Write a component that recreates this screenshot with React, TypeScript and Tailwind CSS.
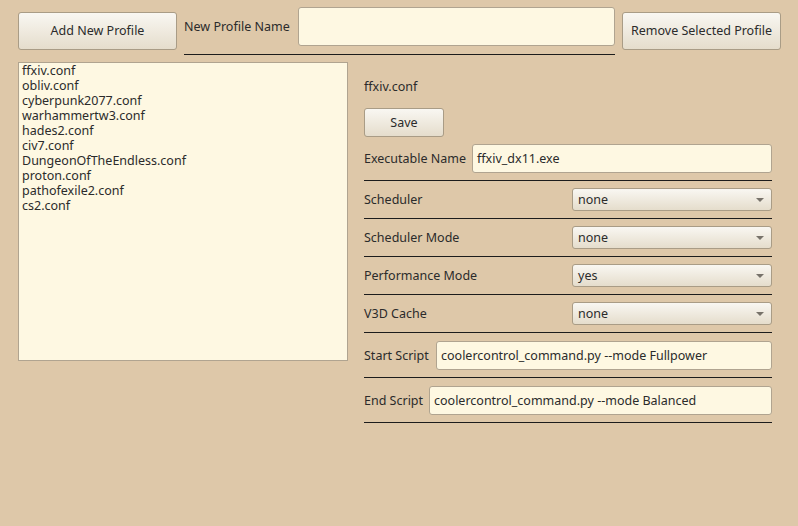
const profiles = [
  'ffxiv.conf',
  'obliv.conf',
  'cyberpunk2077.conf',
  'warhammertw3.conf',
  'hades2.conf',
  'civ7.conf',
  'DungeonOfTheEndless.conf',
  'proton.conf',
  'pathofexile2.conf',
  'cs2.conf',
];

const combos = [
  { label: 'Scheduler', value: 'none' },
  { label: 'Scheduler Mode', value: 'none' },
  { label: 'Performance Mode', value: 'yes' },
  { label: 'V3D Cache', value: 'none' },
];

const bevel =
  'rounded-[3px] border border-[#a99c86] bg-gradient-to-b from-[#f9f7f2] to-[#e5ddcc] text-[#2b2b2b] flex items-center';
const btn = `${bevel} justify-center pt-[1px]`;
const field =
  'rounded-[3px] border border-[#b0a490] bg-[#fef8e2] text-[#2b2b2b] flex items-center px-[4px] pt-[1px]';

function Combo({ value }: { value: string }) {
  return (
    <div className={`${bevel} w-[200px] h-[23px] justify-between pl-[5px] pr-[7px] pt-[1px]`}>
      <span>{value}</span>
      <svg width="8" height="4" viewBox="0 0 8 4">
        <path d="M0 0 L8 0 L4 4 Z" fill="#77726a" />
      </svg>
    </div>
  );
}

export default function App() {
  return (
    <div
      className="w-[798px] h-[526px] bg-[#dec8a9] text-[12.5px] text-[#2b2b2b] overflow-hidden"
      style={{ fontFamily: '"Noto Sans", "Open Sans", sans-serif' }}
    >
      {/* Top bar */}
      <div className="flex items-start pl-[18px] pt-[7px]">
        <button className={`${btn} mt-[5px] w-[159px] h-[38px]`}>Add New Profile</button>
        <div className="ml-[7px] w-[431px] border-b border-[#1c1c1c] pb-[8px] flex items-center justify-between">
          <span className="pt-[2px]">New Profile Name</span>
          <div className={`${field} w-[317px] h-[39px]`} />
        </div>
        <button className={`${btn} ml-[7px] mt-[5px] w-[159px] h-[38px]`}>Remove Selected Profile</button>
      </div>

      {/* Main */}
      <div className="flex items-start pl-[18px] mt-[7px]">
        <div className="w-[330px] h-[299px] border border-[#b0a490] bg-[#fef8e2] pl-[3px]">
          {profiles.map((p) => (
            <div key={p} className="leading-[15px]">
              {p}
            </div>
          ))}
        </div>

        <div className="ml-[16px] w-[408px]">
          <div className="mt-[16px] leading-[18px]">ffxiv.conf</div>
          <button className={`${btn} mt-[12px] w-[80px] h-[29px]`}>Save</button>

          <div className="mt-[7px] flex items-center justify-between pb-[7px] border-b border-[#1c1c1c]">
            <span className="pt-[1px]">Executable Name</span>
            <div className={`${field} w-[300px] h-[29px]`}>ffxiv_dx11.exe</div>
          </div>

          {combos.map((c) => (
            <div
              key={c.label}
              className="flex items-center justify-between py-[7px] border-b border-[#1c1c1c]"
            >
              <span className="pt-[1px]">{c.label}</span>
              <Combo value={c.value} />
            </div>
          ))}

          <div className="flex items-center justify-between pt-[8px] pb-[7px] border-b border-[#1c1c1c]">
            <span className="pt-[1px]">Start Script</span>
            <div className={`${field} w-[336px] h-[29px]`}>coolercontrol_command.py --mode Fullpower</div>
          </div>
          <div className="flex items-center justify-between pt-[8px] pb-[7px] border-b border-[#1c1c1c]">
            <span className="pt-[1px]">End Script</span>
            <div className={`${field} w-[343px] h-[29px]`}>coolercontrol_command.py --mode Balanced</div>
          </div>
        </div>
      </div>
    </div>
  );
}
